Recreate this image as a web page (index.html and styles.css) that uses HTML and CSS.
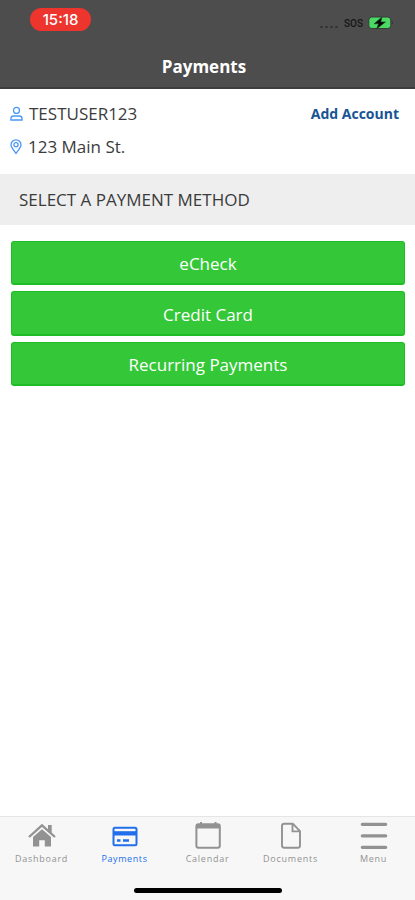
FILE: index.html
```html
<!DOCTYPE html>
<html lang="en">
<head>
<meta charset="utf-8">
<title>Payments</title>
<link rel="stylesheet" href="styles.css">
</head>
<body>
<header class="header">
  <div class="status">
    <span class="clock">15:18</span>
    <div class="indicators">
      <span class="signal"><i></i><i></i><i></i><i></i></span>
      <span class="sos">SOS</span>
      <svg class="battery" width="26" height="14" viewBox="0 0 26 14"><rect x=".8" y="1" width="22" height="11.500" rx="3" fill="#4bd865" stroke="#343b36"/><path d="M23.900 4.800q2 2 0 4z" fill="#303030"/><path d="M14 1 6 7.800h4.600L8.500 13 17.500 5.900h-4.700z" fill="#080808" stroke="#174b21" stroke-width=".6"/></svg>
    </div>
  </div>
  <h1 class="title">Payments</h1>
</header>
<section class="account">
  <div class="row">
    <svg class="row-icon" width="13" height="16" viewBox="0 0 13 16"><circle cx="6.5" cy="4.4" r="3" /><path d="M.9 14v-1.3c0-1.800 1.300-2.700 3-2.700h5.200c1.700 0 3 .9 3 2.700V14z"/></svg>
    <span class="user">TESTUSER123</span>
    <a class="add">Add Account</a>
  </div>
  <div class="row">
    <svg class="row-icon" width="13" height="16" viewBox="0 0 13 16"><path d="M6 14.300C4.200 11.500 1 8.700 1 5.800a5 5 0 0 1 10 0c0 2.900-3.200 5.700-5 8.500z"/><circle cx="6" cy="5.800" r="2.100"/></svg>
    <span class="address">123 Main St.</span>
  </div>
</section>
<h2 class="section-title">SELECT A PAYMENT METHOD</h2>
<main class="methods">
  <button class="method">eCheck</button>
  <button class="method">Credit Card</button>
  <button class="method">Recurring Payments</button>
</main>
<footer class="footer">
  <nav class="tabs">
    <a class="tab"><svg width="30" height="30" viewBox="0 0 30 30"><path d="M15 9.300 24 17v9.500h-6.200v-6.300h-5.600v6.300H6V17z" fill="currentColor"/><path d="m2 17 13-11.600L28 17" fill="none" stroke="currentColor" stroke-width="2.300"/><path d="M21 5h3.700v8L21 9.700z" fill="currentColor"/></svg><span>Dashboard</span></a>
    <a class="tab active"><svg width="30" height="30" viewBox="0 0 30 30"><rect x="3.500" y="7.700" width="23" height="17.600" rx="1.500" fill="none" stroke="currentColor" stroke-width="2"/><path d="M3 11.200h24v4.300H3z" fill="currentColor"/><path d="M7 20.500h3.500m2.500 0h6" stroke="currentColor" stroke-width="2.600"/></svg><span>Payments</span></a>
    <a class="tab"><svg width="30" height="30" viewBox="0 0 30 30"><rect x="3.400" y="4.200" width="23.400" height="23.600" rx="2" fill="none" stroke="currentColor" stroke-width="2"/><path d="M3 4h24v4.500H3z" fill="currentColor"/><path d="M8 2v3M22.500 2v3" stroke="currentColor" stroke-width="2"/></svg><span>Calendar</span></a>
    <a class="tab"><svg width="30" height="30" viewBox="0 0 30 30"><path d="M8.200 3.700h8.600l7.200 7.500v14.300c0 1.400-.7 2.200-2 2.200H8.200c-1.300 0-2.200-.8-2.200-2.200V5.900c0-1.400.9-2.200 2.200-2.200zM16.500 3.700v7.700H24" fill="none" stroke="currentColor" stroke-width="1.900"/></svg><span>Documents</span></a>
    <a class="tab"><svg width="30" height="30" viewBox="0 0 30 30"><path d="M3.300 4.300h23.400M3.300 15.800h23.400M3.300 27.300h23.400" stroke="currentColor" stroke-width="3.200" stroke-linecap="round"/></svg><span>Menu</span></a>
  </nav>
  <div class="home-bar"></div>
</footer>
</body>
</html>
```
FILE: styles.css
```css
* { box-sizing: border-box; }
body {
  margin: 0;
  height: 900px;
  display: flex;
  flex-direction: column;
  background: #fff;
  color: #3b3b3b;
  font-family: "Open Sans", sans-serif;
}
.header {
  height: 89px;
  background: #4d4d4d;
  border-bottom: 2px solid #3d3d3d;
}
.status {
  height: 46px;
  padding: 8px 21px 0 30px;
  display: flex;
  justify-content: space-between;
}
.clock {
  width: 61px;
  height: 23px;
  border-radius: 12px;
  background: #ed342d;
  color: #fff;
  font: 500 15px/23px Inter, sans-serif;
  text-align: center;
}
.indicators { display: flex; height: 29px; align-items: center; }
.signal { display: flex; gap: 2px; margin: 8px 6px 0 0; }
.signal i { width: 3px; height: 2px; border-radius: 1px; background: #343434; }
.sos { width: 24px; padding-top: 2px; font: 500 10px/14px Roboto, sans-serif; color: #151515; }
.title {
  margin: 0;
  color: #fff;
  font-size: 17px;
  line-height: 42px;
  font-weight: 700;
  text-align: center;
  text-indent: -7px;
}
.account { height: 85px; padding: 8px 16px 0 10px; }
.row { display: flex; height: 33px; align-items: center; font-size: 17px; }
.row-icon { margin-right: 5px; fill: none; stroke: #4a98f5; stroke-width: 1.3; }
.user { padding-left: 1px; }
.add { margin-left: auto; color: #175494; font-size: 14px; font-weight: 700; }
.section-title {
  height: 51px;
  margin: 0;
  padding-left: 19px;
  background: #eee;
  font-size: 17px;
  line-height: 52px;
  font-weight: 400;
}
.methods { flex: 1; padding: 16px 10px 0 11px; display: flex; flex-direction: column; gap: 6px; }
.method {
  height: 44.4px;
  padding: 3px 0 0;
  border: 1px solid #1fbd25;
  border-bottom-width: 2px;
  border-radius: 3px;
  background: #34c738;
  color: #fff;
  font: 400 17px/24px "Open Sans", sans-serif;
}
.footer { height: 84px; background: #f7f7f7; border-top: 1px solid #e5e5e5; }
.tabs { display: flex; height: 69px; }
.tab {
  flex: 1;
  display: flex;
  flex-direction: column;
  align-items: center;
  padding-top: 3px;
  color: #929292;
  font-size: 9px;
  line-height: 17px;
  letter-spacing: 0.75px;
}
.tab.active { color: #226fec; letter-spacing: 0.6px; }
.home-bar { width: 148px; height: 5px; margin: 2px auto 0; border-radius: 3px; background: #000; }
```
